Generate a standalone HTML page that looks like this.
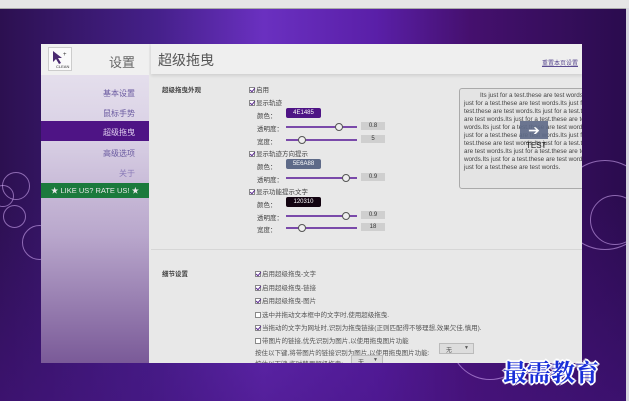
<!DOCTYPE html><html><head><meta charset="utf-8"><style>
*{margin:0;padding:0;box-sizing:border-box}
body{width:629px;height:401px;overflow:hidden;position:relative;font-family:"Liberation Sans","Noto Sans CJK SC",sans-serif;background:#e6e6e6}
.bg{position:absolute;left:0;top:8px;width:627px;height:393px;background:linear-gradient(90deg,#2c1050 0%,#45208a 25%,#6a30c0 42%,#5a1fa8 60%,#45106e 75%,#2a0c4e 100%);border-top:1px solid #aaa}
.bg2{position:absolute;left:0;top:190px;width:627px;height:211px;background:linear-gradient(180deg,rgba(80,30,150,0),rgba(70,20,130,.6))}
.c{position:absolute;border-radius:50%;border:1px solid rgba(220,180,255,.55)}
.win{position:absolute;left:41px;top:44px;width:541px;height:319px;background:#e8e8e8;overflow:hidden}
.side{position:absolute;left:0;top:0;width:108px;height:319px;background:linear-gradient(180deg,#eae6f0 0%,#d8cfe4 30%,#b9a7cc 60%,#7a5a98 100%)}
.side .hd{height:31px;background:#f0f0f0;position:relative}
.it{position:absolute;right:14px;font-size:8px;color:#6a5aa0}
.sel{position:absolute;left:0;top:77px;width:108px;height:20px;background:#4e1485}
.green{position:absolute;left:0;top:139px;width:108px;height:15px;background:#1b7a3c;color:#e8e8e8;font-size:7.5px;line-height:15px;text-align:center}
.main{position:absolute;left:110px;top:0;right:0;bottom:0}
.mh{height:30px;background:#efefef;box-shadow:0 2px 3px rgba(0,0,0,.1);font-size:14px;color:#555;padding:6px 0 0 7px}
.t{position:absolute;font-size:6.5px;color:#444;white-space:nowrap}
.cb{display:inline-block;width:6px;height:6px;background:#fff;border:1px solid #888;margin-right:1px;vertical-align:-1px;position:relative}
.cb.on::after{content:"";position:absolute;left:1px;top:-1px;width:2px;height:4px;border:solid #5a2a90;border-width:0 1.5px 1.5px 0;transform:rotate(40deg)}
.sw{position:absolute;width:35px;height:10px;border-radius:2px;color:#fff;font-size:6px;text-align:center;line-height:10px}
.sl{position:absolute;height:2px;background:#7a4aaa}
.kn{position:absolute;width:8px;height:8px;border-radius:50%;background:#eee;border:1px solid #555;top:-3px}
.v{position:absolute;width:24px;height:8px;background:#cfcfcf;font-size:6px;color:#333;text-align:center;line-height:8px}
.dd{position:absolute;height:11px;background:#ddd;border:1px solid #bbb;font-size:6px;color:#555;padding:1px 0 0 6px}
</style></head><body>
<div class="bg"></div><div class="bg2"></div>
<div class="c" style="left:2px;top:172px;width:28px;height:28px"></div>
<div class="c" style="left:-8px;top:185px;width:22px;height:22px"></div>
<div class="c" style="left:3px;top:205px;width:23px;height:23px"></div>
<div class="c" style="left:22px;top:225px;width:35px;height:35px"></div>
<div class="c" style="left:450px;top:300px;width:80px;height:80px"></div>
<div class="c" style="left:560px;top:160px;width:90px;height:90px"></div>
<div class="c" style="left:590px;top:195px;width:50px;height:50px"></div>
<div style="position:absolute;left:626px;top:8px;width:3px;height:393px;background:#d8d8e0"></div>
<div class="win">
 <div class="side">
  <div class="hd">
   <div style="position:absolute;left:7px;top:3px;width:24px;height:24px;border:1px solid #ccc;background:#fafafa"></div>
   <svg style="position:absolute;left:10px;top:5px" width="20" height="20"><path d="M2 2 L2 13 L5 10 L8 15 L10 14 L7 9 L11 9 Z" fill="#4a2a70"/><text x="12" y="7" font-size="6" fill="#333">+</text><text x="5" y="19" font-size="4" fill="#333" font-family="Liberation Sans">CLEAN</text></svg>
   <div style="position:absolute;right:14px;top:8px;font-size:13px;color:#666">设置</div>
  </div>
  <div class="it" style="top:44px">基本设置</div>
  <div class="it" style="top:64px">鼠标手势</div>
  <div class="sel"></div><div class="it" style="top:83px;color:#e0d0f0">超级拖曳</div>
  <div class="it" style="top:104px">高级选项</div>
  <div class="it" style="top:124px;color:#8a7ab8">关于</div>
  <div class="green">★ LIKE US? RATE US! ★</div>
 </div>
 <div class="main">
  <div class="mh">超级拖曳</div>
  <div class="t" style="right:4px;top:14px;text-decoration:underline;color:#5a4a90;font-size:6px">重置本页设置</div>
  <div class="t" style="left:11px;top:40px;font-weight:bold">超级拖曳外观</div>
  <div class="t" style="left:98px;top:40px"><span class="cb on"></span>启用</div>
  <div class="t" style="left:98px;top:53px"><span class="cb on"></span>显示轨迹</div>
  <div class="t" style="left:106px;top:66px">颜色：</div><div class="sw" style="left:135px;top:64px;background:#4e1485">4E1485</div>
  <div class="t" style="left:106px;top:79px">透明度：</div><div class="sl" style="left:135px;top:82px;width:71px"><div class="kn" style="left:49px"></div></div><div class="v" style="left:210px;top:78px">0.8</div>
  <div class="t" style="left:106px;top:92px">宽度：</div><div class="sl" style="left:135px;top:95px;width:71px"><div class="kn" style="left:12px"></div></div><div class="v" style="left:210px;top:91px">5</div>
  <div class="t" style="left:98px;top:104px"><span class="cb on"></span>显示轨迹方向提示</div>
  <div class="t" style="left:106px;top:117px">颜色：</div><div class="sw" style="left:135px;top:115px;background:#5e6a88">5E6A88</div>
  <div class="t" style="left:106px;top:130px">透明度：</div><div class="sl" style="left:135px;top:133px;width:71px"><div class="kn" style="left:56px"></div></div><div class="v" style="left:210px;top:129px">0.9</div>
  <div class="t" style="left:98px;top:142px"><span class="cb on"></span>显示功能提示文字</div>
  <div class="t" style="left:106px;top:155px">颜色：</div><div class="sw" style="left:135px;top:153px;background:#120310">120310</div>
  <div class="t" style="left:106px;top:168px">透明度：</div><div class="sl" style="left:135px;top:171px;width:71px"><div class="kn" style="left:56px"></div></div><div class="v" style="left:210px;top:167px">0.9</div>
  <div class="t" style="left:106px;top:180px">宽度：</div><div class="sl" style="left:135px;top:183px;width:71px"><div class="kn" style="left:12px"></div></div><div class="v" style="left:210px;top:179px">18</div>
  <div style="position:absolute;left:308px;top:44px;width:140px;height:101px;border:1px solid #aaa;border-radius:3px;background:#e4e4e4;font-size:6.3px;line-height:8px;color:#444;padding:3px 2px 0 4px;overflow:hidden;text-indent:16px">Its just for a test.these are test words.Its just for a test.these are test words.Its just for a test.these are test words.Its just for a test.these are test words.Its just for a test.these are test words.Its just for a test.these are test words.Its just for a test.these are test words.Its just for a test.these are test words.Its just for a test.these are test words.Its just for a test.these are test words.Its just for a test.these are test words.Its just for a test.these are test words.</div>
  <div style="position:absolute;left:369px;top:77px;width:28px;height:18px;background:#5e6a88;color:#fff;font-size:14px;text-align:center;line-height:18px;opacity:.9">➔</div>
  <div class="t" style="left:375px;top:97px;font-size:8px;color:#222">TEST</div>
  <div style="position:absolute;left:0;right:0;top:205px;height:1px;background:#d6d6d6"></div>
  <div class="t" style="left:11px;top:224px;font-weight:bold">细节设置</div>
  <div class="t" style="left:104px;top:224px;color:#555"><span class="cb on"></span>启用超级拖曳-文字</div>
  <div class="t" style="left:104px;top:238px;color:#555"><span class="cb on"></span>启用超级拖曳-链接</div>
  <div class="t" style="left:104px;top:251px;color:#555"><span class="cb on"></span>启用超级拖曳-图片</div>
  <div class="t" style="left:104px;top:265px;color:#555"><span class="cb"></span>选中并拖动文本框中的文字时,使用超级拖曳.</div>
  <div class="t" style="left:104px;top:278px;color:#555"><span class="cb on"></span>当拖动的文字为网址时,识别为拖曳链接(正则匹配得不够理想,效果欠佳,慎用).</div>
  <div class="t" style="left:104px;top:291px;color:#555"><span class="cb"></span>带图片的链接,优先识别为图片,以使用拖曳图片功能</div>
  <div class="t" style="left:104px;top:303px;color:#555">按住以下键,将带图片的链接识别为图片,以使用拖曳图片功能:</div>
  <div class="dd" style="left:288px;top:299px;width:35px">无 <span style="float:right;margin-right:4px;font-size:5px">▼</span></div>
  <div class="t" style="left:104px;top:314px;color:#555">按住以下键,临时禁用超级拖曳:</div>
  <div class="dd" style="left:200px;top:311px;width:32px">无 <span style="float:right;margin-right:4px;font-size:5px">▼</span></div>
 </div>
</div>
<div style="position:absolute;left:503px;top:353px;font-family:'Noto Serif CJK SC',serif;font-weight:bold;font-size:24px;color:#1a2fd8;letter-spacing:0;text-shadow:-2px 0 #fff,2px 0 #fff,0 -2px #fff,0 2px #fff,-1px -1px #fff,1px 1px #fff,-1px 1px #fff,1px -1px #fff">最需教育</div>
</body></html>
